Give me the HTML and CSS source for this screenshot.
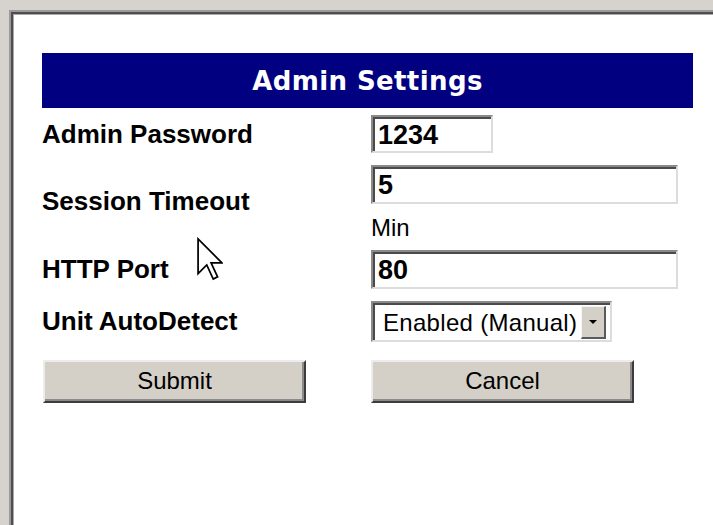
FILE: index.html
```html
<!DOCTYPE html>
<html lang="en">
<head>
<meta charset="utf-8">
<title>Admin Settings</title>
<link rel="stylesheet" href="styles.css">
</head>
<body>
<div class="frame">
  <div class="panel">
    <div class="title">Admin Settings</div>
    <form class="form">
      <label class="label">Admin Password</label>
      <div class="field"><input class="text short" type="text" value="1234"></div>

      <label class="label">Session Timeout</label>
      <div class="field">
        <input class="text wide" type="text" value="5">
        <div class="unit">Min</div>
      </div>

      <label class="label">HTTP Port</label>
      <div class="field"><input class="text wide" type="text" value="80"></div>

      <label class="label">Unit AutoDetect</label>
      <div class="field">
        <div class="select">
          <span class="select-value">Enabled (Manual)</span>
          <span class="select-btn"><span class="tri"></span></span>
        </div>
      </div>

      <div class="actions-cell first"><button type="button" class="btn">Submit</button></div>
      <div class="actions-cell"><button type="button" class="btn">Cancel</button></div>
    </form>
  </div>
  <svg class="pointer" width="26" height="44" viewBox="-0.5 -0.5 12 19.5" aria-hidden="true">
    <path d="M0 0 L0 16 L4 12 L7 18.5 L9 17.5 L6 11 L11 11 Z" fill="#fff" stroke="#000" stroke-width="0.8" stroke-linejoin="miter"/>
  </svg>
</div>
</body>
</html>
```

FILE: styles.css
```css
html, body {
  margin: 0;
  padding: 0;
  height: 100%;
  overflow: hidden;
}

body {
  background: #d6d3ce;
  font-family: "Liberation Sans", Arial, sans-serif;
  color: #000;
}

/* window client area with a sunken top/left edge */
.frame {
  position: relative;
  box-sizing: border-box;
  margin: 10px 0 0 9px;
  width: calc(100% - 9px);
  height: calc(100% - 10px);
  background: #fff;
  border-top: 2px solid #9a9a9a;
  border-left: 2px solid #9a9a9a;
  box-shadow: inset 2px 2px 0 #4e4e4e, inset 3px 3px 0 #a8a8a8;
}

.panel {
  padding: 41px 0 0 31px;
  width: 651px;
}

.title {
  height: 55px;
  background: #000080;
  color: #fff;
  font-family: "DejaVu Sans", Verdana, sans-serif;
  font-weight: bold;
  font-size: 26px;
  letter-spacing: 0.4px;
  display: flex;
  align-items: center;
  justify-content: center;
}

.form {
  margin-top: 7px;
  display: grid;
  grid-template-columns: 329px 1fr;
  row-gap: 12px;
  align-items: center;
}

.label {
  font-weight: bold;
  font-size: 26px;
}

.field {
  display: flex;
  flex-direction: column;
  align-items: flex-start;
}

/* sunken text boxes */
.text {
  box-sizing: border-box;
  margin: 0;
  height: 38px;
  padding: 2px 0 0 5px;
  border-style: solid;
  border-width: 2px;
  border-color: #8a8a8a #dcdcdc #dcdcdc #8a8a8a;
  box-shadow: inset 2px 2px 0 #4a4a4a;
  background: #fff;
  font-family: "Liberation Sans", Arial, sans-serif;
  font-weight: bold;
  font-size: 27px;
  color: #000;
  outline: none;
}

.short { width: 122px; }
.wide { width: 307px; height: 39px; }

.unit {
  margin-top: 14px;
  font-size: 24px;
  line-height: 20px;
}

.select {
  box-sizing: border-box;
  width: 241px;
  height: 41px;
  display: flex;
  align-items: center;
  border-style: solid;
  border-width: 2px;
  border-color: #8a8a8a #dcdcdc #dcdcdc #8a8a8a;
  box-shadow: inset 2px 2px 0 #4a4a4a;
  padding: 2px 4px 0 10px;
}

.select-value {
  flex: 1;
  font-size: 24px;
  letter-spacing: 0.3px;
  white-space: nowrap;
}

.select-btn {
  width: 25px;
  height: 33px;
  box-sizing: border-box;
  background: #d4d0c8;
  border-style: solid;
  border-width: 1px 2px 2px 1px;
  border-color: #f4f4f4 #5a5a5a #5a5a5a #f4f4f4;
  display: flex;
  align-items: center;
  justify-content: center;
}

.tri {
  width: 0;
  height: 0;
  border-left: 4px solid transparent;
  border-right: 4px solid transparent;
  border-top: 4px solid #000;
}

.actions-cell {
  margin-top: 6px;
}

.actions-cell.first {
  padding-left: 1px;
}

.btn {
  box-sizing: border-box;
  width: 263px;
  height: 43px;
  margin: 0;
  padding: 0 0 2px;
  background: #d4d0c8;
  border-style: solid;
  border-width: 2px;
  border-color: #ececec #3c3c3c #3c3c3c #ececec;
  box-shadow: inset -2px -2px 0 #8a8a8a;
  font-family: "Liberation Sans", Arial, sans-serif;
  font-size: 24px;
  color: #000;
}

/* mouse pointer resting over the form */
.pointer {
  position: absolute;
  left: 186px;
  top: 225px;
}
```
